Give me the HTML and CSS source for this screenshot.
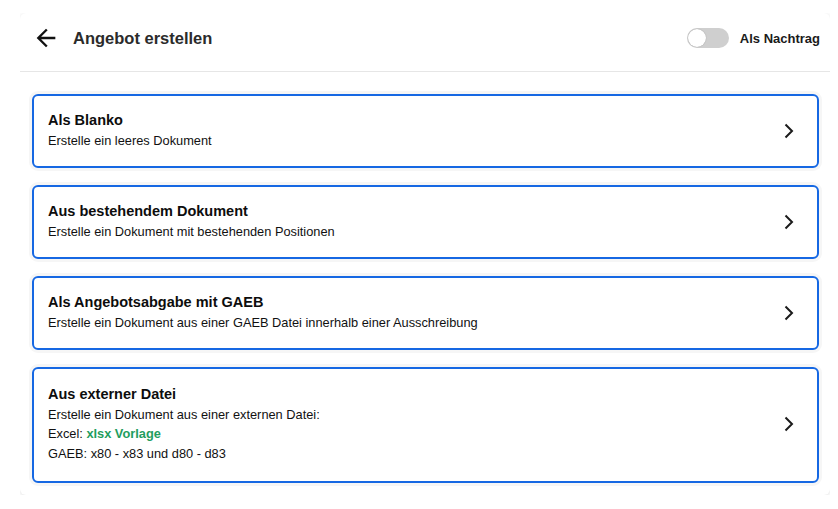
FILE: index.html
```html
<!DOCTYPE html>
<html lang="de">
<head>
  <meta charset="UTF-8">
  <meta name="viewport" content="width=device-width, initial-scale=1.0">
  <title>Angebot erstellen</title>
  <link rel="stylesheet" href="styles.css">
</head>
<body>
  <div class="panel">
    <div class="panel-header">
      <button class="back-btn" aria-label="Zurück">
        <svg width="28" height="28" viewBox="0 0 24 24"><path d="M20 11H7.83l5.59-5.59L12 4l-8 8 8 8 1.41-1.41L7.83 13H20v-2z" fill="#111"/></svg>
      </button>
      <h1>Angebot erstellen</h1>
      <label class="switch-row">
        <span class="switch"><span class="knob"></span></span>
        <span class="switch-label">Als Nachtrag</span>
      </label>
    </div>

    <div class="options">
      <a class="option" href="#">
        <div class="option-text">
          <div class="option-title">Als Blanko</div>
          <div>Erstelle ein leeres Dokument</div>
        </div>
        <svg class="chevron" width="12" height="16" viewBox="0 0 12 16"><polyline points="2.5,1.5 9,8 2.5,14.5" fill="none" stroke="#1b1b1b" stroke-width="2"/></svg>
      </a>
      <a class="option" href="#">
        <div class="option-text">
          <div class="option-title">Aus bestehendem Dokument</div>
          <div>Erstelle ein Dokument mit bestehenden Positionen</div>
        </div>
        <svg class="chevron" width="12" height="16" viewBox="0 0 12 16"><polyline points="2.5,1.5 9,8 2.5,14.5" fill="none" stroke="#1b1b1b" stroke-width="2"/></svg>
      </a>
      <a class="option" href="#">
        <div class="option-text">
          <div class="option-title">Als Angebotsabgabe mit GAEB</div>
          <div>Erstelle ein Dokument aus einer GAEB Datei innerhalb einer Ausschreibung</div>
        </div>
        <svg class="chevron" width="12" height="16" viewBox="0 0 12 16"><polyline points="2.5,1.5 9,8 2.5,14.5" fill="none" stroke="#1b1b1b" stroke-width="2"/></svg>
      </a>
      <a class="option option-tall" href="#">
        <div class="option-text">
          <div class="option-title">Aus externer Datei</div>
          <div>Erstelle ein Dokument aus einer externen Datei:</div>
          <div>Excel: <span class="green-link">xlsx Vorlage</span></div>
          <div>GAEB: x80 - x83 und d80 - d83</div>
        </div>
        <svg class="chevron" width="12" height="16" viewBox="0 0 12 16"><polyline points="2.5,1.5 9,8 2.5,14.5" fill="none" stroke="#1b1b1b" stroke-width="2"/></svg>
      </a>
    </div>
  </div>
</body>
</html>
```

FILE: styles.css
```css
body {
  font-family: "Liberation Sans", Arial, sans-serif;
  background-color: #ffffff;
  margin: 13px 8px 0 20px;
  padding: 0;
  color: #111;
}
.panel {
  width: 810px;
  background-color: #fff;
  border-radius: 6px;
  box-shadow: 0 1px 4px rgba(0, 0, 0, 0.12);
}
.panel-header {
  display: flex;
  align-items: center;
  height: 28px;
  padding: 11px 10px 19px 12px;
  border-bottom: 1px solid #e6e6e6;
}
.back-btn {
  background: none;
  border: none;
  padding: 0;
  width: 28px;
  height: 28px;
  display: flex;
}
.panel-header h1 {
  font-size: 16.5px;
  font-weight: bold;
  color: #2b2b2b;
  margin: 0 0 0 13px;
  flex: 1;
}
.switch-row {
  display: flex;
  align-items: center;
  gap: 11px;
}
.switch {
  width: 42px;
  height: 20px;
  border-radius: 10px;
  background-color: #cfcfcf;
  display: flex;
  align-items: center;
  padding: 0 1px;
  box-sizing: border-box;
}
.knob {
  width: 18px;
  height: 18px;
  border-radius: 50%;
  background-color: #fff;
  box-shadow: 0 0 1px rgba(0, 0, 0, 0.35);
}
.switch-label {
  font-size: 13px;
  font-weight: bold;
  color: #1a1a1a;
}
.options {
  display: flex;
  flex-direction: column;
  gap: 17px;
  padding: 22px 11px 12px 12px;
}
.option {
  display: flex;
  align-items: center;
  border: 2px solid #1668e3;
  border-radius: 6px;
  padding: 15px 22px 16px 14px;
  color: #111;
  text-decoration: none;
  font-size: 12.8px;
  line-height: 19.5px;
  box-shadow: 0 0 0 3px #f6f6f6;
}
.option-tall {
  padding-top: 16px;
  padding-bottom: 18px;
}
.option-text {
  flex: 1;
}
.option-title {
  font-size: 14.5px;
  font-weight: bold;
  color: #0d0d0d;
}
.green-link {
  color: #1f9d5e;
  font-weight: bold;
}
.chevron {
  display: block;
}
```
